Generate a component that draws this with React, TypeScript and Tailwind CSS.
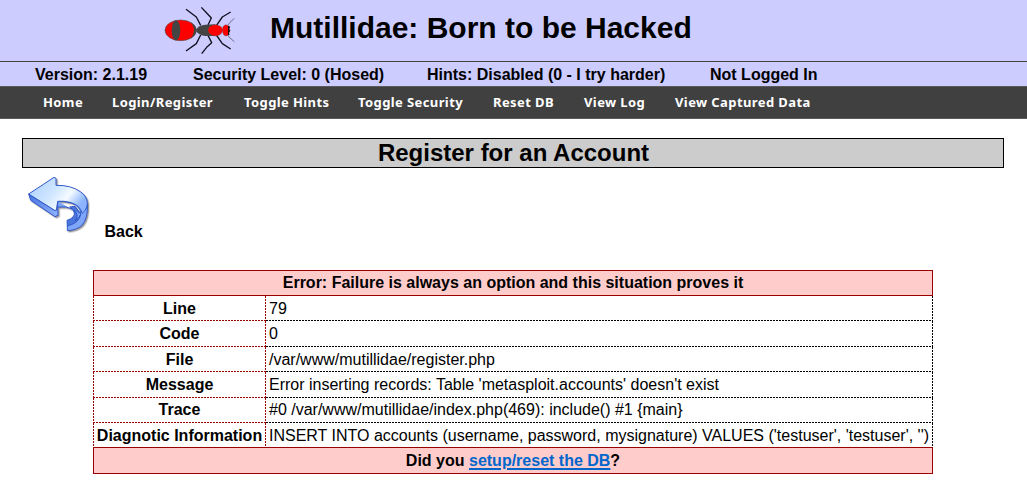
const status = [
  { text: "Version: 2.1.19", className: "w-[158px]" },
  { text: "Security Level: 0 (Hosed)", className: "w-[234px]" },
  { text: "Hints: Disabled (0 - I try harder)", className: "w-[283px]" },
  { text: "Not Logged In", className: "w-[120px]" },
];

const menu = [
  { text: "Home", className: "w-[69px]" },
  { text: "Login/Register", className: "w-[132px]" },
  { text: "Toggle Hints", className: "w-[114px]" },
  { text: "Toggle Security", className: "w-[135px]" },
  { text: "Reset DB", className: "w-[91px]" },
  { text: "View Log", className: "w-[91px]" },
  { text: "View Captured Data", className: "w-[150px]" },
];

const rows = [
  { label: "Line", value: "79", className: "h-6 leading-[26px]" },
  { label: "Code", value: "0", className: "h-[25px] leading-[26px]" },
  {
    label: "File",
    value: "/var/www/mutillidae/register.php",
    className: "h-6 leading-[26px]",
  },
  {
    label: "Message",
    value: "Error inserting records: Table 'metasploit.accounts' doesn't exist",
    className: "h-[25px] leading-[26px]",
  },
  {
    label: "Trace",
    value: "#0 /var/www/mutillidae/index.php(469): include() #1 {main}",
    className: "h-6 leading-6",
  },
  {
    label: "Diagnotic Information",
    value:
      "INSERT INTO accounts (username, password, mysignature) VALUES ('testuser', 'testuser', '')",
    className: "h-6 leading-[26px]",
  },
];

// dashed rules, 2px on and 1px off
const redColumn =
  "w-px shrink-0 bg-[repeating-linear-gradient(180deg,#990000_0_2px,transparent_2px_3px)]";
const blackColumn =
  "w-px shrink-0 bg-[repeating-linear-gradient(180deg,#000_0_2px,transparent_2px_3px)]";
const redRule =
  "w-[173px] shrink-0 bg-[repeating-linear-gradient(90deg,#990000_0_2px,transparent_2px_3px)]";
const blackRule =
  "flex-1 bg-[repeating-linear-gradient(90deg,#000_0_2px,transparent_2px_3px)]";

function Ant() {
  return (
    <svg className="h-[61px] w-[100px] shrink-0" viewBox="0 0 300 183">
      <g fill="none" stroke="#111122" strokeWidth="4" strokeLinejoin="round">
        <path d="M152 76L139 51L108 28M174 75L184 54L170 39L154 22M199 77L217 51L242 36" />
        <path d="M152 105L139 131L108 153M174 106L185 128L170 142L155 161M199 105L217 131L242 147" />
        <path d="M233 77L240 67L253 55M233 105L240 114L253 125" strokeWidth="2" stroke="#444455" />
      </g>
      <path d="M137 91Q146 75 166 74L196 73V108L166 108Q146 107 137 91Z" fill="#444" />
      <ellipse cx="92" cy="91" rx="47" ry="31" fill="#f00" stroke="#555" strokeWidth="2" />
      <path d="M121 66Q139 77 140 91Q139 106 121 116Q132 103 132 91Q132 78 121 66Z" fill="#444" />
      <ellipse cx="78" cy="91" rx="13" ry="30" fill="#444" />
      <ellipse cx="196" cy="91" rx="22" ry="17" fill="#f00" stroke="#555" />
      <ellipse cx="228" cy="91" rx="11" ry="17" fill="#f00" stroke="#555" />
      <path d="M234 77L241 80L237 87L241 92L236 98L239 104L234 106Z" fill="#111" />
    </svg>
  );
}

function BackArrow() {
  return (
    <svg className="h-[70px] w-[80px] shrink-0" viewBox="0 0 240 210">
      <defs>
        <linearGradient id="arrowTop" x1="0" y1="0" x2="1" y2="0.5">
          <stop offset="0" stopColor="#a9ccff" />
          <stop offset="0.5" stopColor="#cfe6ff" />
          <stop offset="0.75" stopColor="#f4faff" />
          <stop offset="1" stopColor="#8db5ff" />
        </linearGradient>
        <linearGradient id="arrowSide" x1="0" y1="0" x2="1" y2="1">
          <stop offset="0" stopColor="#4571df" />
          <stop offset="1" stopColor="#91b5ff" />
        </linearGradient>
        <filter id="arrowShadow">
          <feDropShadow dx="4" dy="4" stdDeviation="2" floodColor="#555" floodOpacity="0.6" />
        </filter>
      </defs>
      <g filter="url(#arrowShadow)" stroke="#3059c6" strokeWidth="3" strokeLinejoin="round">
        {/* underside of the head */}
        <path d="M41 87L47 106L120 155L129 151L128 109L119 136Z" fill="url(#arrowSide)" />
        {/* inside of the curl */}
        <path
          d="M164 126Q186 142 174 156Q167 163 156 166L157 184Q190 176 198 148L180 124Z"
          fill="#4a74dd"
        />
        {/* edge of the band */}
        <path
          d="M128 109Q160 106 181 119Q199 132 197 148Q193 174 157 183V197Q184 196 201 181Q220 160 217 115Q215 134 205 138Q190 108 128 109V126Q154 123 172 132Q196 148 181 167Q193 160 197 148"
          fill="#7ea6fb"
        />
        <path
          d="M41 87L117 37L123 40L123 61Q168 60 196 80Q217 94 217 115Q216 134 202 145Q195 120 165 112Q147 107 128 109L124 136L119 136Z"
          fill="url(#arrowTop)"
        />
      </g>
    </svg>
  );
}

export default function App() {
  return (
    <div className="h-[495px] w-[1027px] overflow-hidden bg-white font-['Liberation_Sans',Arial,sans-serif] text-base text-black">
      <header>
        <div className="flex h-[62px] border-b border-[#444] bg-[#ccccff] pl-[150px]">
          <Ant />
          <h1 className="ml-5 mt-[10px] whitespace-nowrap text-[30px] font-bold leading-9">
            Mutillidae: Born to be Hacked
          </h1>
        </div>
        <div className="flex h-6 bg-[#ccccff] pl-[35px] font-bold leading-[25px]">
          {status.map((item) => (
            <span key={item.text} className={`${item.className} shrink-0 whitespace-nowrap`}>
              {item.text}
            </span>
          ))}
        </div>
        <nav className="flex h-[33px] border-y border-[#5a5a5a] bg-[#404040] pl-[43px] font-['Noto_Sans',Verdana,sans-serif] text-[13px] font-bold leading-[31px] tracking-[0.4px] text-white">
          {menu.map((item) => (
            <a key={item.text} href="#" className={`${item.className} shrink-0 whitespace-nowrap`}>
              {item.text}
            </a>
          ))}
        </nav>
      </header>

      <main>
        <h2 className="ml-[22px] mt-[19px] h-[30px] w-[982px] border border-black bg-[#cccccc] pl-px text-center text-2xl font-bold leading-7">
          Register for an Account
        </h2>
        <a href="#" className="ml-[15px] mt-[-3px] flex h-[81px] font-bold">
          <BackArrow />
          <span className="ml-[9.5px] mt-[55px] leading-6">Back</span>
        </a>

        <section className="ml-[93px] mt-6 w-[840px]">
          <div className="h-[26px] border border-[#990000] bg-[#ffcccc] text-center font-bold leading-6">
            Error: Failure is always an option and this situation proves it
          </div>
          {rows.map((row, i) => (
            <div key={row.label}>
              <div className={`${row.className} flex`}>
                <div className={redColumn} />
                <div className="w-[171px] shrink-0 text-center font-bold">{row.label}</div>
                <div className={redColumn} />
                <div className="flex-1 whitespace-nowrap pl-[3px]">{row.value}</div>
                <div className={blackColumn} />
              </div>
              {i < rows.length - 1 && (
                <div className="flex h-px">
                  <div className={redRule} />
                  <div className={blackRule} />
                </div>
              )}
            </div>
          ))}
          <div className="h-[27px] border border-[#990000] bg-[#ffcccc] text-center font-bold leading-[26px]">
            Did you{" "}
            <a href="#" className="text-[#0066cc] underline decoration-2 underline-offset-2">
              setup/reset the DB
            </a>
            ?
          </div>
        </section>
      </main>
    </div>
  );
}
